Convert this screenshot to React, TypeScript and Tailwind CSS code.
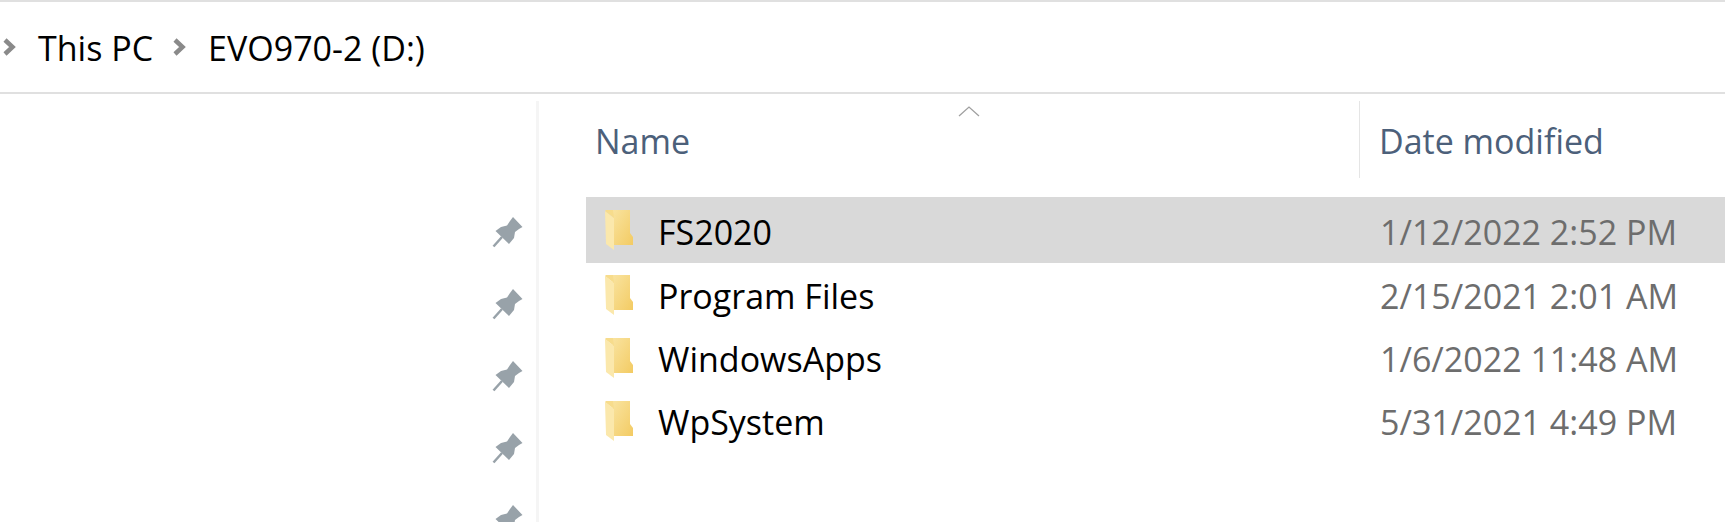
import React from 'react';

const files = [
  { name: 'FS2020', date: '1/12/2022 2:52 PM', selected: true },
  { name: 'Program Files', date: '2/15/2021 2:01 AM', selected: false },
  { name: 'WindowsApps', date: '1/6/2022 11:48 AM', selected: false },
  { name: 'WpSystem', date: '5/31/2021 4:49 PM', selected: false }
];

const Chevron = () => (
  <svg width="14" height="18" viewBox="0 0 14 18" className="shrink-0">
    <path d="M2 2 L9.5 9 L2 16" fill="none" stroke="#8a8a8a" strokeWidth="4.5" />
  </svg>
);

const Pin = () => (
  <svg width="32" height="32" viewBox="0 0 32 32" className="shrink-0">
    <path d="M1.5 30.5 L10 21" stroke="#98a2a9" strokeWidth="2.5" />
    <path d="M21 1 L30.5 11 L27 13 L23 16 L22 22 L17 28 L3.5 15 L9 11 L15 9.5 L18 5 Z" fill="#98a2a9" />
  </svg>
);

const Folder = () => (
  <svg width="30" height="42" viewBox="0 0 30 42" className="shrink-0">
    <defs>
      <linearGradient id="folderBack" x1="0" y1="0" x2="1" y2="1">
        <stop offset="0" stopColor="#f9e39f" />
        <stop offset="1" stopColor="#f3cb63" />
      </linearGradient>
    </defs>
    <path d="M8 1 H25 V24 L28 28 V36 H8 Z" fill="url(#folderBack)" />
    <path d="M0 2 L9 9 V41 L1 35 Z" fill="#fbe8ac" />
    <path d="M0 2 L1 1 H8 L9 9 Z" fill="#f7dc8c" />
  </svg>
);

export default function App() {
  return (
    <div className="h-[522px] w-[1725px] overflow-hidden bg-white font-['Open_Sans',sans-serif] text-[34px]">
      <div className="flex h-[94px] items-center border-y-2 border-[#e0e0e0] pl-[3px] text-black">
        <Chevron />
        <span className="ml-[21px] pt-[2px]">This PC</span>
        <span className="ml-[20px]"><Chevron /></span>
        <span className="ml-[21px] pt-[2px]">EVO970-2 (D:)</span>
      </div>

      <div className="flex">
        <div className="flex h-[428px] w-[536px] flex-col items-end gap-[40px] pt-[122px] pr-[12px]">
          <Pin />
          <Pin />
          <Pin />
          <Pin />
          <Pin />
        </div>
        <div className="mt-[7px] w-[3px] bg-[#f5f5f5]" />

        <div className="min-w-0 flex-1 pt-[7px] pl-[47px]">
          <div className="relative flex h-[96px] text-[#4c607a]">
            <svg width="22" height="12" viewBox="0 0 22 12" className="absolute top-[4px] left-[372px]">
              <path d="M1 11 L11 2 L21 11" fill="none" stroke="#a0a0a0" strokeWidth="1.3" />
            </svg>
            <div className="flex h-[77px] w-[774px] items-center border-r border-[#e5e5e5] pt-[4px] pl-[9px]">
              Name
            </div>
            <div className="flex h-[77px] items-center pt-[4px] pl-[19px]">Date modified</div>
          </div>

          {files.map(file => (
            <div
              key={file.name}
              className={file.selected ? 'flex h-[66px] items-center bg-[#d9d9d9]' : 'flex h-[63px] items-center'}
            >
              <div className="flex w-[775px] items-center pl-[19px]">
                <Folder />
                <span className="ml-[23px] pt-[4px] text-black">{file.name}</span>
              </div>
              <span className="pt-[4px] pl-[19px] text-[#6d6d6d]">{file.date}</span>
            </div>
          ))}
        </div>
      </div>
    </div>
  );
}
